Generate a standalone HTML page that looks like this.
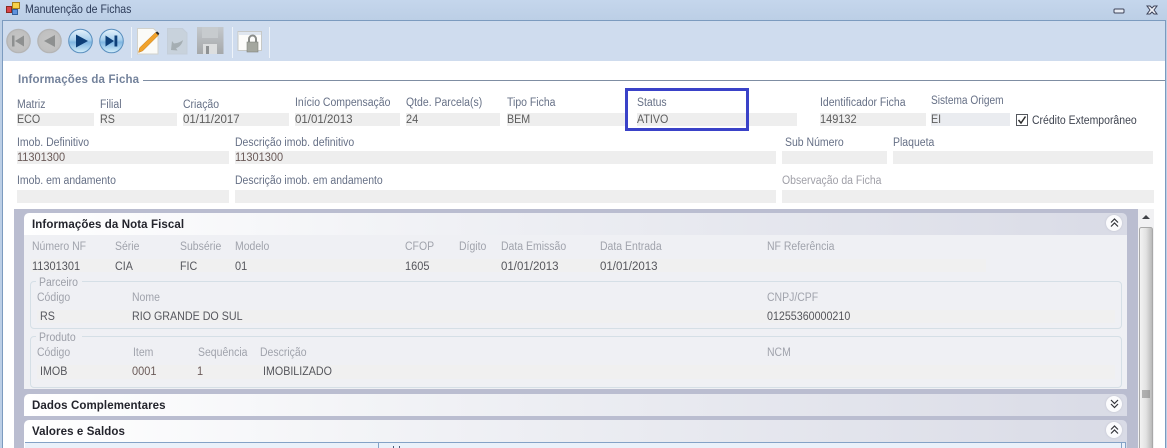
<!DOCTYPE html>
<html><head><meta charset="utf-8"><style>
html,body{margin:0;padding:0;background:#fff}
#p{position:relative;width:1167px;height:448px;overflow:hidden;background:#fff;font-family:"Liberation Sans",sans-serif;font-size:11.5px;line-height:14px;color:#5a6274}
#p div,#p span,#p svg{position:absolute}
#p span{transform-origin:left top}
.l{white-space:nowrap;color:#667086;transform:translateY(1px) scaleX(.91)}
.v{white-space:nowrap;color:#5c5c5c;transform:translateY(1px) scaleX(.93)}
.f{background:#eeeeee}
.g{white-space:nowrap;color:#a0a3ac;transform:translateY(1px) scaleX(.91)}
.d{white-space:nowrap;color:#55565c;transform:translateY(1px) scaleX(.93)}
#p .n{transform:translateY(1px) scaleX(.955)}
#p .s{transform:translateY(1px)}
.h{white-space:nowrap;font-weight:bold;font-size:11.5px;color:#23242c;letter-spacing:.1px;transform:translateY(1px)}
.fs{border:1px solid #d5dfe6;border-radius:4px;box-sizing:border-box}
.ph{background:linear-gradient(90deg,#ffffff 0%,#f3f4f7 30%,#d9dbe6 100%);border-radius:5px 5px 0 0}
.cb{width:16px;height:16px;border-radius:50%;background:#fbfbfd;box-shadow:0 0 2px #c0c2cc}
</style></head><body><div id="p">
<!-- title bar -->
<div style="left:0;top:0;width:1167px;height:20px;background:linear-gradient(#c5d6ec,#bccfe6)"></div>
<svg style="left:6px;top:2px" width="14" height="13" viewBox="0 0 14 13"><rect x="0.5" y="4.5" width="5" height="6" fill="#d9434a" stroke="#8a2a20"/><rect x="6.5" y="0.5" width="7" height="6" fill="#f7d24a" stroke="#a8801c"/><rect x="6.5" y="7.5" width="5" height="5" fill="#5f92dc" stroke="#32609f"/></svg>
<span style="left:25px;top:3px;font-size:11.7px;color:#2c3b58;white-space:nowrap;transform:scaleX(.9)">Manutenção de Fichas</span>
<svg style="left:1113px;top:5px" width="48" height="12" viewBox="0 0 48 12"><rect x="1" y="4" width="10" height="4" rx="1" fill="#e8ecf4" stroke="#3c4258"/><path d="M34 1h3l2 2 2-2h3l-3 4 3 4h-3l-2-2-2 2h-3l3-4z" fill="#f0f2f8" stroke="#3c4258"/></svg>
<!-- frame -->
<div style="left:0;top:20px;width:1167px;height:428px;background:#bccfe6"></div>
<div style="left:2px;top:20px;width:1164px;height:428px;background:#7c9bbf"></div>
<div style="left:3px;top:21px;width:1162px;height:40px;background:#cfdcee"></div>
<div style="left:3px;top:61px;width:1162px;height:387px;background:#fff"></div>
<!-- toolbar -->
<svg style="left:3px;top:21px" width="280" height="40" viewBox="3 21 280 40">
<defs>
<radialGradient id="gr" cx=".5" cy=".5" r=".55"><stop offset="0" stop-color="#c6c6c6"/><stop offset=".8" stop-color="#c0c0c0"/><stop offset="1" stop-color="#a9a9a9"/></radialGradient>
<linearGradient id="bl" x1="0" y1="0" x2="0" y2="1"><stop offset="0" stop-color="#e6f2fb"/><stop offset=".45" stop-color="#a8d0ee"/><stop offset=".55" stop-color="#7fb6e2"/><stop offset="1" stop-color="#d4eefa"/></linearGradient>
<linearGradient id="fl" x1="0" y1="0" x2="0" y2="1"><stop offset="0" stop-color="#c4c8cc"/><stop offset="1" stop-color="#a5a8aa"/></linearGradient>
</defs>
<circle cx="18.500" cy="41" r="11.800" fill="url(#gr)" stroke="#b4b4b4"/>
<path d="M12 35.500h2.500v11H12zM24 35.500v11l-9-5.500z" fill="#8e9090"/>
<circle cx="49.500" cy="41" r="11.800" fill="url(#gr)" stroke="#b4b4b4"/>
<path d="M55 35v12l-11-6z" fill="#8e9090"/>
<circle cx="80.500" cy="41" r="11.800" fill="url(#bl)" stroke="#5a8fbe"/>
<path d="M76 34.500v13l12-6.500z" fill="#0d3f78"/>
<circle cx="111.500" cy="41" r="11.800" fill="url(#bl)" stroke="#5a8fbe"/>
<path d="M105.500 35.500v11l8.500-5.500zM114.500 35.500h2.800v11h-2.800z" fill="#0d3f78"/>
<rect x="131" y="27" width="1" height="31" fill="#eef3f9"/>
<rect x="232" y="27" width="1" height="31" fill="#eef3f9"/>
<rect x="269" y="27" width="1" height="31" fill="#eef3f9"/>
<path d="M137.500 28.500h16l4.500 4.500v21h-20.500z" fill="#fbfbf8" stroke="#d2d2cc"/>
<path d="M138.500 52.500l1.200-4.800 15.800-15.200 2.800 2.800-15.500 15.500z" fill="#f0a22c" stroke="#c07a1c" stroke-width=".5"/>
<path d="M155.500 32.500l2.800 2.800 1-1.800-2-2z" fill="#2c2c2c"/>
<path d="M167.500 28.500h15l4.500 4.500v21h-19.500z" fill="#c8d2dc" stroke="#c4ced9"/>
<path d="M171 50l1-9 2 2.500c3-.5 6-1 9-3.500-1 5-5 8-7 8l1.500 2.500z" fill="#a5aeb3"/>
<path d="M197 27h26.500v27h-26.500z" fill="url(#fl)"/>
<rect x="202" y="27" width="16" height="11" fill="#c7cbce"/>
<rect x="203" y="44" width="14" height="10" fill="#dcdedf"/>
<rect x="206" y="46" width="3" height="8" fill="#8f9294"/>
<path d="M238 31.500h23.500v19h-23.500z" fill="#fcfcfa" stroke="#c6c8c6"/>
<rect x="239" y="32" width="22" height="3" fill="#dfe6ef"/>
<path d="M249 42v-3a3.500 3.500 0 0 1 7 0V42" fill="none" stroke="#8a8d8a" stroke-width="2"/>
<rect x="247" y="42" width="11" height="10" fill="#a4a79f" stroke="#80837c" stroke-width=".6"/>
</svg>
<!-- heading -->
<span style="left:18px;top:73px;font-weight:bold;font-size:11.5px;letter-spacing:.15px;color:#73829b;white-space:nowrap">Informações da Ficha</span>
<div style="left:143px;top:80px;width:1022px;height:1px;background:#7f8ea3"></div>
<!-- row1 -->
<span class="l" style="left:17px;top:97px">Matriz</span><div class="f" style="left:17px;top:113px;width:77px;height:13px"></div><span class="v" style="left:17px;top:112px">ECO</span>
<span class="l" style="left:100px;top:97px">Filial</span><div class="f" style="left:100px;top:113px;width:77px;height:13px"></div><span class="v" style="left:100px;top:112px">RS</span>
<span class="l" style="left:183px;top:97px">Criação</span><div class="f" style="left:183px;top:113px;width:106px;height:13px"></div><span class="v s" style="left:183px;top:112px">01/11/2017</span>
<span class="l" style="left:295px;top:95px">Início Compensação</span><div class="f" style="left:295px;top:113px;width:105px;height:13px"></div><span class="v s" style="left:295px;top:112px">01/01/2013</span>
<span class="l" style="left:406px;top:95px">Qtde. Parcela(s)</span><div class="f" style="left:406px;top:113px;width:94px;height:13px"></div><span class="v n" style="left:406px;top:112px">24</span>
<span class="l" style="left:507px;top:95px">Tipo Ficha</span><div class="f" style="left:507px;top:113px;width:290px;height:13px"></div><span class="v" style="left:507px;top:112px">BEM</span>
<div style="left:628px;top:91px;width:118px;height:37px;background:#fff"></div>
<div class="f" style="left:637px;top:113px;width:109px;height:13px"></div>
<span class="l" style="left:637px;top:95px">Status</span><span class="v" style="left:637px;top:112px">ATIVO</span>
<div style="left:625px;top:88px;width:124px;height:43px;box-sizing:border-box;border:3px solid #3a42c8"></div>
<span class="l" style="left:820px;top:95px">Identificador Ficha</span><div class="f" style="left:820px;top:113px;width:106px;height:13px"></div><span class="v n" style="left:820px;top:112px">149132</span>
<span class="l" style="left:931px;top:93px;transform:translateY(1px) scaleX(.88)">Sistema Origem</span><div style="left:931px;top:113px;width:79px;height:13px;background:#eaecf0"></div><span class="v" style="left:931px;top:112px">EI</span>
<svg style="left:1016px;top:114px" width="12" height="12" viewBox="0 0 12 12"><rect x=".5" y=".5" width="11" height="11" fill="#fff" stroke="#55585e"/><path d="M2.500 6l2.500 3 4.500-6.500" fill="none" stroke="#2c2c2c" stroke-width="1.500"/></svg>
<span class="l" style="left:1032px;top:113px;color:#3f4450">Crédito Extemporâneo</span>
<!-- row2 -->
<span class="l" style="left:17px;top:135px">Imob. Definitivo</span><div class="f" style="left:17px;top:151px;width:212px;height:13px"></div><span class="v n" style="left:17px;top:150px;color:#6a5a58">11301300</span>
<span class="l" style="left:235px;top:135px">Descrição imob. definitivo</span><div class="f" style="left:235px;top:151px;width:541px;height:13px"></div><span class="v n" style="left:235px;top:150px;color:#6a5a58">11301300</span>
<span class="l" style="left:785px;top:135px">Sub Número</span><div class="f" style="left:782px;top:151px;width:105px;height:13px"></div>
<span class="l" style="left:893px;top:135px">Plaqueta</span><div class="f" style="left:893px;top:151px;width:260px;height:13px"></div>
<!-- row3 -->
<span class="l" style="left:17px;top:173px">Imob. em andamento</span><div class="f" style="left:17px;top:190px;width:212px;height:13px"></div>
<span class="l" style="left:235px;top:173px">Descrição imob. em andamento</span><div class="f" style="left:235px;top:190px;width:541px;height:13px"></div>
<span class="l" style="left:782px;top:173px;color:#a0a0a8">Observação da Ficha</span><div class="f" style="left:782px;top:190px;width:372px;height:13px"></div>
<!-- panel area -->
<div style="left:14px;top:209px;width:1124px;height:239px;background:#babdd0"></div>
<!-- scrollbar -->
<div style="left:1138px;top:209px;width:16px;height:239px;background:#f1f1f3"></div>
<svg style="left:1138px;top:209px" width="16" height="239" viewBox="0 0 16 239"><path d="M8 6l4 4H4z" fill="#404248"/><defs><linearGradient id="sb" x1="0" x2="1" y1="0" y2="0"><stop offset="0" stop-color="#f4f4f4"/><stop offset=".5" stop-color="#e2e2e2"/><stop offset="1" stop-color="#b6b6b6"/></linearGradient></defs><rect x="1.500" y="18.500" width="13" height="225" rx="2" fill="url(#sb)" stroke="#a8a8a8"/><path d="M4 182h8M4 184h8M4 186h8M4 188h8" stroke="#777" stroke-width="1"/></svg>
<!-- panel 1 -->
<div class="ph" style="left:24px;top:213px;width:1103px;height:22px"></div>
<div style="left:24px;top:235px;width:1103px;height:154px;background:#eff0f4"></div>
<span class="h" style="left:32px;top:217px">Informações da Nota Fiscal</span>
<div class="cb" style="left:1106px;top:215px"></div>
<svg style="left:1110px;top:218px" width="9" height="10" viewBox="0 0 9 10"><path d="M1 4.500l3.500-3.500 3.500 3.500M1 8.500l3.500-3.500 3.500 3.500" fill="none" stroke="#33343a" stroke-width="1.200"/></svg>
<span class="g" style="left:32px;top:239px">Número NF</span>
<span class="g" style="left:115px;top:239px">Série</span>
<span class="g" style="left:180px;top:239px">Subsérie</span>
<span class="g" style="left:235px;top:239px">Modelo</span>
<span class="g" style="left:405px;top:239px">CFOP</span>
<span class="g" style="left:459px;top:239px">Dígito</span>
<span class="g" style="left:501px;top:239px">Data Emissão</span>
<span class="g" style="left:600px;top:239px">Data Entrada</span>
<span class="g" style="left:767px;top:239px">NF Referência</span>
<div style="left:31px;top:259px;width:955px;height:13px;background:#f0f0f0"></div>
<span class="d n" style="left:32px;top:259px">11301301</span>
<span class="d" style="left:115px;top:259px">CIA</span>
<span class="d" style="left:180px;top:259px">FIC</span>
<span class="d n" style="left:235px;top:259px">01</span>
<span class="d n" style="left:405px;top:259px">1605</span>
<span class="d s" style="left:501px;top:259px">01/01/2013</span>
<span class="d s" style="left:600px;top:259px">01/01/2013</span>
<!-- parceiro -->
<div class="fs" style="left:30px;top:281px;width:1092px;height:48px"></div>
<div style="left:36px;top:275px;width:46px;height:14px;background:#eff0f4"></div>
<span class="g" style="left:39px;top:275px;color:#9c9fa8">Parceiro</span>
<span class="g" style="left:37px;top:290px">Código</span>
<span class="g" style="left:132px;top:290px">Nome</span>
<span class="g" style="left:767px;top:290px">CNPJ/CPF</span>
<div style="left:37px;top:310px;width:1078px;height:13px;background:#f0f0f0"></div>
<span class="d" style="left:40px;top:309px">RS</span>
<span class="d" style="left:132px;top:309px">RIO GRANDE DO SUL</span>
<span class="d n" style="left:767px;top:309px;transform:translateY(1px) scaleX(.93)">01255360000210</span>
<!-- produto -->
<div class="fs" style="left:30px;top:336px;width:1092px;height:52px"></div>
<div style="left:36px;top:330px;width:46px;height:14px;background:#eff0f4"></div>
<span class="g" style="left:39px;top:330px;color:#9c9fa8">Produto</span>
<span class="g" style="left:37px;top:345px">Código</span>
<span class="g" style="left:133px;top:345px">Item</span>
<span class="g" style="left:198px;top:345px">Sequência</span>
<span class="g" style="left:260px;top:345px">Descrição</span>
<span class="g" style="left:767px;top:345px">NCM</span>
<div style="left:37px;top:365px;width:1078px;height:14px;background:#f0f0f0"></div>
<span class="d" style="left:40px;top:364px">IMOB</span>
<span class="d n" style="left:132px;top:364px;color:#6a5a58">0001</span>
<span class="d n" style="left:197px;top:364px;color:#6a5a58">1</span>
<span class="d" style="left:263px;top:364px">IMOBILIZADO</span>
<!-- panel 2 -->
<div class="ph" style="left:24px;top:394px;width:1103px;height:22px"></div>
<span class="h" style="left:32px;top:398px">Dados Complementares</span>
<div class="cb" style="left:1106px;top:396px"></div>
<svg style="left:1110px;top:399px" width="9" height="10" viewBox="0 0 9 10"><path d="M1 1l3.500 3.500L8 1M1 5l3.500 3.500L8 5" fill="none" stroke="#33343a" stroke-width="1.200"/></svg>
<!-- panel 3 -->
<div class="ph" style="left:24px;top:420px;width:1103px;height:28px"></div>
<span class="h" style="left:32px;top:424px">Valores e Saldos</span>
<div class="cb" style="left:1106px;top:422px"></div>
<svg style="left:1110px;top:425px" width="9" height="10" viewBox="0 0 9 10"><path d="M1 4.500l3.500-3.500 3.500 3.500M1 8.500l3.500-3.500 3.500 3.500" fill="none" stroke="#33343a" stroke-width="1.200"/></svg>
<div style="left:25px;top:442px;width:1100px;height:6px;background:#eaf1fa;border-top:1px solid #84a2c6"></div>
<div style="left:378px;top:442px;width:1px;height:6px;background:#84a2c6"></div>
<div style="left:1121px;top:442px;width:1px;height:6px;background:#84a2c6"></div>
<div style="left:1125px;top:442px;width:1px;height:6px;background:#84a2c6"></div>
<div style="left:393px;top:446px;width:1px;height:2px;background:#4a5a78"></div>
<div style="left:399px;top:446px;width:1px;height:2px;background:#4a5a78"></div>
</div></body></html>
